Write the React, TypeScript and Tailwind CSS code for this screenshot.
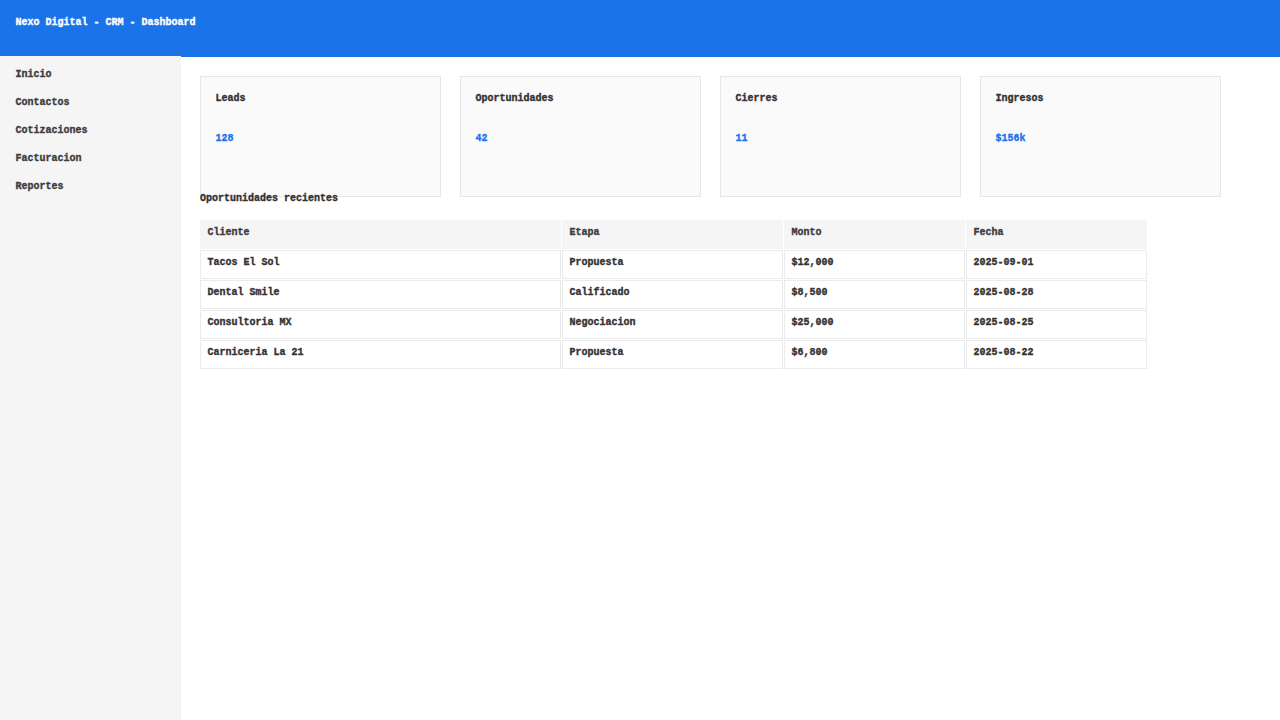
import React from 'react';
import clsx from 'clsx';

interface Stat {
  label: string;
  value: string;
}

interface Deal {
  cliente: string;
  etapa: string;
  monto: string;
  fecha: string;
}

const menu = ['Inicio', 'Contactos', 'Cotizaciones', 'Facturacion', 'Reportes'];

const stats: Stat[] = [
  { label: 'Leads', value: '128' },
  { label: 'Oportunidades', value: '42' },
  { label: 'Cierres', value: '11' },
  { label: 'Ingresos', value: '$156k' },
];

const deals: Deal[] = [
  { cliente: 'Tacos El Sol', etapa: 'Propuesta', monto: '$12,000', fecha: '2025-09-01' },
  { cliente: 'Dental Smile', etapa: 'Calificado', monto: '$8,500', fecha: '2025-08-28' },
  { cliente: 'Consultoria MX', etapa: 'Negociacion', monto: '$25,000', fecha: '2025-08-25' },
  { cliente: 'Carniceria La 21', etapa: 'Propuesta', monto: '$6,800', fecha: '2025-08-22' },
];

const Row: React.FC<{ cells: string[]; header?: boolean }> = ({ cells, header }) => (
  <div className="grid grid-cols-[361px_221px_181px_181px] gap-px">
    {cells.map((cell, i) => (
      <div
        key={i}
        className={clsx(
          'h-[29px] border pl-[6.6px] pt-[6px]',
          header ? 'bg-[#f5f5f5] border-[#f5f5f5] text-[#3c3c3c]' : 'bg-white border-[#ebebeb] text-[#323232]'
        )}
      >
        {cell}
      </div>
    ))}
  </div>
);

export default function App() {
  return (
    <div className="h-screen flex flex-col overflow-hidden bg-white whitespace-nowrap font-['Liberation_Mono',monospace] text-[10px] leading-[11px] font-bold [-webkit-text-stroke:0.35px_currentColor]">
      <header className="h-[57px] shrink-0 bg-[#1a73e8] text-white pl-[15.6px] pt-[17px]">
        Nexo Digital - CRM - Dashboard
      </header>

      <div className="flex flex-1">
        {/* Sidebar covers the last pixel row of the header */}
        <nav className="w-[181px] shrink-0 -mt-px bg-[#f5f5f5] text-[#3c3c3c] pl-[15.6px] pt-[13px] flex flex-col gap-[17px]">
          {menu.map((item) => (
            <a key={item}>{item}</a>
          ))}
        </nav>

        <main className="pl-[19px] pt-[19px] text-[#323232]">
          <div className="flex gap-[19px]">
            {stats.map((s) => (
              <div key={s.label} className="w-[241px] h-[121px] bg-[#fafafa] border border-[#e6e6e6] pl-[14.6px] pt-4">
                <div>{s.label}</div>
                <div className="mt-[29px] text-[#1a73e8]">{s.value}</div>
              </div>
            ))}
          </div>

          {/* Title sits over the bottom edge of the first card */}
          <h2 className="relative -mt-1">Oportunidades recientes</h2>

          <div className="mt-4 flex flex-col gap-px">
            <Row header cells={['Cliente', 'Etapa', 'Monto', 'Fecha']} />
            {deals.map((d) => (
              <Row key={d.cliente} cells={[d.cliente, d.etapa, d.monto, d.fecha]} />
            ))}
          </div>
        </main>
      </div>
    </div>
  );
}
